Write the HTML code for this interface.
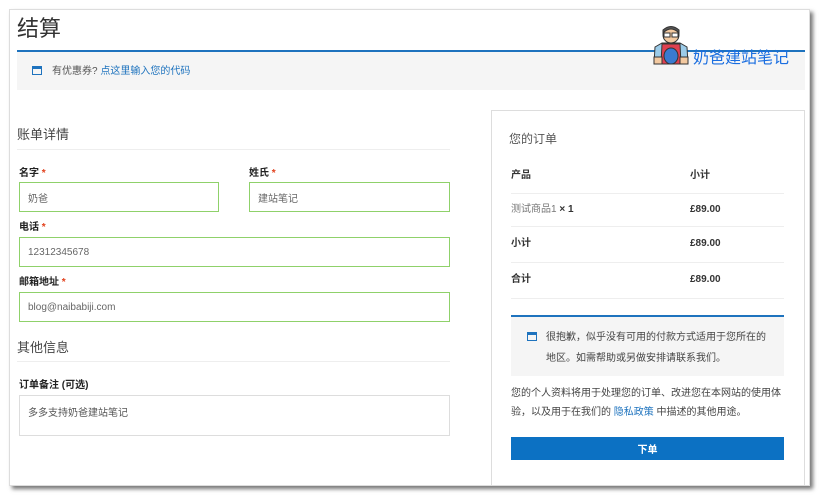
<!DOCTYPE html>
<html><head><meta charset="utf-8"><style>
*{box-sizing:border-box;margin:0;padding:0}
body{width:821px;height:495px;background:#fff;font-family:"Liberation Sans","Noto Sans CJK SC",sans-serif;position:relative;overflow:hidden;color:#333}
.frame{position:absolute;left:9px;top:9px;width:801px;height:477px;background:#fff;border:1px solid #ddd;box-shadow:3px 3px 4px #777}
.a{position:absolute}
.lbl{font-size:10px;font-weight:bold;color:#222;line-height:14px}
.lbl b{color:#e2401c}
.in{position:absolute;border:1px solid #8fd16a;background:#fff;font-size:10px;color:#666;padding-left:8px;display:flex;align-items:center}
.ico{position:absolute;width:10px;height:9px;border:1.5px solid #1e73be;border-top-width:3px}
.hr{position:absolute;height:1px;background:#eee}
.t{font-size:10px;line-height:14px}
</style></head><body>
<div class="frame"></div>
<div class="a" style="left:17px;top:11px;font-size:22px;color:#333">结算</div>
<div class="a" style="left:17px;top:50px;width:788px;height:2px;background:#1e73be"></div>
<div class="a" style="left:17px;top:52px;width:788px;height:38px;background:#f5f5f5"></div>
<div class="ico" style="left:32px;top:66px"></div>
<div class="a t" style="left:52px;top:65px;color:#555">有优惠券? <span style="color:#1e73be">点这里输入您的代码</span></div>
<div class="a" style="left:650px;top:25px;width:42px;height:40px">
<svg width="42" height="40" viewBox="0 0 42 40"><circle cx="21" cy="10" r="8" fill="#f3c9a0" stroke="#333"/><path d="M13 8 Q21 0 29 8 L29 5 Q21 -2 13 5Z" fill="#555" stroke="#333"/><rect x="14" y="8" width="6" height="4" fill="#fff" stroke="#333"/><rect x="22" y="8" width="6" height="4" fill="#fff" stroke="#333"/><path d="M5 22 L12 18 L30 18 L37 22 L38 39 L4 39Z" fill="#9ccbe8" stroke="#333"/><path d="M12 19 L30 19 L31 39 L11 39Z" fill="#e04050" stroke="#333"/><ellipse cx="21" cy="31" rx="7" ry="8" fill="#3a7ad0" stroke="#333"/><rect x="4" y="32" width="8" height="7" fill="#f3c9a0" stroke="#333"/><rect x="30" y="32" width="8" height="7" fill="#f3c9a0" stroke="#333"/></svg></div>
<div class="a" style="left:693px;top:44px;font-size:16px;color:#1a6ee0">奶爸建站笔记</div>
<div class="a" style="left:17px;top:124px;font-size:13px;color:#444">账单详情</div>
<div class="hr" style="left:17px;top:149px;width:433px"></div>
<div class="a lbl" style="left:19px;top:167px">名字 <b>*</b></div>
<div class="in" style="left:19px;top:182px;width:200px;height:30px">奶爸</div>
<div class="a lbl" style="left:249px;top:167px">姓氏 <b>*</b></div>
<div class="in" style="left:249px;top:182px;width:201px;height:30px">建站笔记</div>
<div class="a lbl" style="left:19px;top:221px">电话 <b>*</b></div>
<div class="in" style="left:19px;top:237px;width:431px;height:30px">12312345678</div>
<div class="a lbl" style="left:19px;top:276px">邮箱地址 <b>*</b></div>
<div class="in" style="left:19px;top:292px;width:431px;height:30px">blog@naibabiji.com</div>
<div class="a" style="left:17px;top:337px;font-size:13px;color:#444">其他信息</div>
<div class="hr" style="left:17px;top:361px;width:433px"></div>
<div class="a lbl" style="left:19px;top:379px">订单备注 (可选)</div>
<div class="a" style="left:19px;top:395px;width:431px;height:41px;border:1px solid #ddd;font-size:10px;color:#555;padding:8px 0 0 8px">多多支持奶爸建站笔记</div>
<div class="a" style="left:491px;top:110px;width:314px;height:376px;border:1px solid #ddd"></div>
<div class="a" style="left:509px;top:130px;font-size:12px;color:#555">您的订单</div>
<div class="a t" style="left:511px;top:169px;font-weight:bold">产品</div>
<div class="a t" style="left:690px;top:169px;font-weight:bold">小计</div>
<div class="hr" style="left:511px;top:193px;width:273px"></div>
<div class="a t" style="left:511px;top:203px;color:#777">测试商品1 <span style="color:#333;font-weight:bold">× 1</span></div>
<div class="a t" style="left:690px;top:203px;font-weight:bold">£89.00</div>
<div class="hr" style="left:511px;top:226px;width:273px"></div>
<div class="a t" style="left:511px;top:237px;font-weight:bold">小计</div>
<div class="a t" style="left:690px;top:237px;font-weight:bold">£89.00</div>
<div class="hr" style="left:511px;top:262px;width:273px"></div>
<div class="a t" style="left:511px;top:273px;font-weight:bold">合计</div>
<div class="a t" style="left:690px;top:273px;font-weight:bold">£89.00</div>
<div class="hr" style="left:511px;top:298px;width:273px"></div>
<div class="a" style="left:511px;top:315px;width:273px;height:61px;background:#f5f5f5;border-top:2px solid #1e73be"></div>
<div class="ico" style="left:527px;top:332px"></div>
<div class="a t" style="left:546px;top:327px;width:222px;line-height:21px;color:#444">很抱歉，似乎没有可用的付款方式适用于您所在的地区。如需帮助或另做安排请联系我们。</div>
<div class="a t" style="left:511px;top:384px;width:275px;line-height:19px;color:#444">您的个人资料将用于处理您的订单、改进您在本网站的使用体验，以及用于在我们的 <span style="color:#1e73be">隐私政策</span> 中描述的其他用途。</div>
<div class="a" style="left:511px;top:437px;width:273px;height:23px;background:#0c71c3;color:#fff;font-size:10px;font-weight:bold;display:flex;align-items:center;justify-content:center">下单</div>
</body></html>
